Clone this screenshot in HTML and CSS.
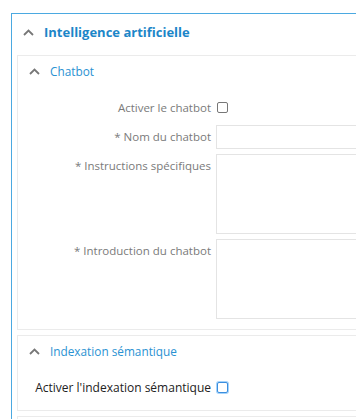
FILE: index.html
```html
<!DOCTYPE html>
<html lang="fr">
<head>
    <meta charset="UTF-8">
    <meta name="viewport" content="width=device-width, initial-scale=1.0">
    <title>Intelligence artificielle</title>
    <link rel="stylesheet" href="styles.css">
</head>
<body>
    <!-- Main panel -->
    <div class="panel">
        <div class="panel-heading">
            <svg class="chevron" width="11" height="7" viewBox="0 0 11 7"><path d="M1 6 L5.5 1.5 L10 6" fill="none" stroke="#777" stroke-width="1.8"/></svg>
            <span>Intelligence artificielle</span>
        </div>

        <div class="panel-body">
            <!-- Chatbot -->
            <div class="subpanel">
                <div class="subpanel-heading">
                    <svg class="chevron" width="11" height="7" viewBox="0 0 11 7"><path d="M1 6 L5.5 1.5 L10 6" fill="none" stroke="#777" stroke-width="1.8"/></svg>
                    <span>Chatbot</span>
                </div>
                <div class="form">
                    <div class="form-row check-row">
                        <label for="chatbotActive">Activer le chatbot</label>
                        <input type="checkbox" id="chatbotActive" class="check">
                    </div>
                    <div class="form-row">
                        <label for="chatbotName">* Nom du chatbot</label>
                        <input type="text" id="chatbotName" class="field">
                    </div>
                    <div class="form-row">
                        <label for="chatbotInstructions">* Instructions spécifiques</label>
                        <textarea id="chatbotInstructions" class="area"></textarea>
                    </div>
                    <div class="form-row">
                        <label for="chatbotIntro">* Introduction du chatbot</label>
                        <textarea id="chatbotIntro" class="area"></textarea>
                    </div>
                </div>
            </div>

            <!-- Indexation -->
            <div class="subpanel">
                <div class="subpanel-heading">
                    <svg class="chevron" width="11" height="7" viewBox="0 0 11 7"><path d="M1 6 L5.5 1.5 L10 6" fill="none" stroke="#777" stroke-width="1.8"/></svg>
                    <span>Indexation sémantique</span>
                </div>
                <div class="form">
                    <div class="form-row check-row">
                        <label for="indexActive" class="dark">Activer l'indexation sémantique</label>
                        <input type="checkbox" id="indexActive" class="check focus">
                    </div>
                </div>
            </div>

            <div class="subpanel"></div>
        </div>
    </div>
</body>
</html>
```

FILE: styles.css
```css
body {
    margin: 0;
    background: #fff;
    font-family: "Open Sans", Arial, sans-serif;
    overflow: hidden;
}

/* Main panel */
.panel {
    width: 600px;
    margin: 13px 0 0 11px;
    border: 1px solid #4ba9e1;
}

.panel-heading {
    box-sizing: border-box;
    height: 41px;
    display: flex;
    align-items: center;
    padding: 0 0 5px 11px;
    font-size: 13px;
    font-weight: bold;
    color: #1c86c8;
}

.chevron {
    margin-right: 10px;
}

.panel-body {
    padding-left: 5px;
}

/* Sub panels */
.subpanel {
    border: 1px solid #ebebeb;
    margin-bottom: 5px;
    min-height: 10px;
}

.subpanel-heading {
    box-sizing: border-box;
    height: 32px;
    display: flex;
    align-items: center;
    padding: 0 0 2px 11px;
    font-size: 11.8px;
    color: #2a92d2;
}

.form {
    display: flex;
    flex-direction: column;
    gap: 5px;
    padding: 7px 0 10px;
}

.form-row {
    display: grid;
    grid-template-columns: 193px 1fr;
    column-gap: 5px;
    align-items: start;
}

.check-row {
    height: 25px;
    align-items: center;
}

label {
    text-align: right;
    font-size: 11.5px;
    line-height: 24px;
    color: #7a7a7a;
}

label.dark {
    color: #222;
    font-size: 12px;
}

.check {
    appearance: none;
    width: 11px;
    height: 11px;
    margin: 0 0 0 1px;
    border: 1px solid #777;
    border-radius: 2px;
    background: #fff;
}

.check.focus {
    border-color: #3b8ede;
    box-shadow: 0 0 0 1px #a6d4fb;
}

.field,
.area {
    box-sizing: border-box;
    width: 300px;
    border: 1px solid #e4e4e4;
    background: #fff;
    margin: 0;
    padding: 4px;
    font: inherit;
}

.field {
    height: 24px;
}

.area {
    height: 80px;
    resize: none;
}
```
